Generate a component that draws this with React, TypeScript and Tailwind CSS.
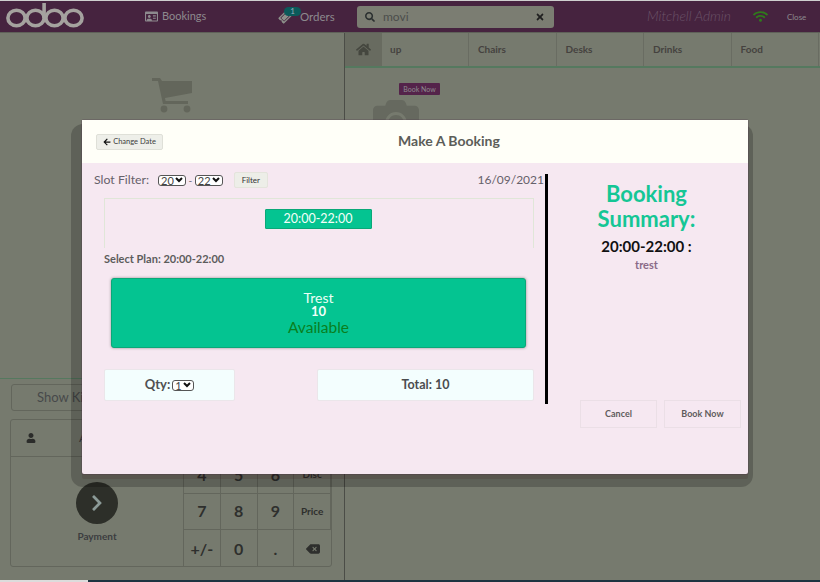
import { FaArrowLeft, FaCamera, FaChevronRight, FaHome, FaRegIdCard, FaSearch, FaTicketAlt, FaTimes, FaUser, FaWifi } from 'react-icons/fa';
import { FaDeleteLeft } from 'react-icons/fa6';

const tabs = ['up', 'Chairs', 'Desks', 'Drinks', 'Food'];

const keypadRows = [
  ['4', '5', '6', 'Disc'],
  ['7', '8', '9', 'Price'],
  ['+/-', '0', '.', 'back'],
];

function OdooLogo() {
  return (
    <svg width="78" height="25" viewBox="0 0 78 25" fill="none" stroke="#a5a29f" strokeWidth="3.6">
      <ellipse cx="10.5" cy="15" rx="8.6" ry="7.8" />
      <ellipse cx="29.5" cy="15" rx="8.6" ry="7.8" />
      <path d="M38.1 0v15" />
      <ellipse cx="48.5" cy="15" rx="8.6" ry="7.8" />
      <ellipse cx="67.5" cy="15" rx="8.6" ry="7.8" />
    </svg>
  );
}

function CartIcon() {
  return (
    <svg width="40" height="35" viewBox="0 0 40 35" fill="#63665b">
      <path d="M0 0h8l2 3h30v12L13 20l.6 3H36v3H11L6 3H0z" />
      <circle cx="12" cy="31" r="3.4" />
      <circle cx="35" cy="31" r="3.4" />
    </svg>
  );
}

function SmallSelect({ value, width }: { value: string; width: string }) {
  return (
    <span className={`inline-flex h-[11px] ${width} items-center justify-between rounded-[3px] border border-[#555] bg-white pl-[2px] pr-[2px] text-[11px] font-normal leading-none text-[#444]`}>
      {value}
      <svg width="8" height="6" viewBox="0 0 8 6" fill="none" stroke="#111" strokeWidth="2">
        <path d="M1 1l3 3 3-3" />
      </svg>
    </span>
  );
}

function PosBackground() {
  return (
    <div className="flex h-[582px] w-[820px] flex-col bg-[#767a6e]">
      <div className="h-px bg-[#cfcfcf]" />
      <header className="flex h-[32px] items-center border-b border-[#5f6159] bg-[#46233f] text-[#8d8a8e]">
        <div className="ml-[6px] mt-[-2px] w-[139px]">
          <OdooLogo />
        </div>
        <div className="flex w-[134px] items-center gap-[4px] text-[11px]">
          <FaRegIdCard className="text-[13px]" />
          Bookings
        </div>
        <div className="relative flex w-[78px] items-center gap-[9px] text-[11.5px]">
          <FaTicketAlt className="-rotate-45 text-[12px] text-[#8d918b]" />
          Orders
          <span className="absolute left-[5px] top-[-1px] h-[9px] w-[17px] rounded-full bg-[#0b5a5a] text-center text-[8px] leading-[9px] text-[#9ab]">1</span>
        </div>
        <div className="flex h-[22px] w-[197px] items-center rounded-[3px] bg-[#7b7d72] pl-[8px] pr-[9px] text-[12px] text-[#4b4e4c]">
          <FaSearch className="mr-[8px] text-[10px] text-[#2b3030]" />
          <span className="flex-1">movi</span>
          <FaTimes className="text-[10px] text-[#202020]" />
        </div>
        <span className="ml-[93px] text-[13.8px] font-light italic text-[#6b5368]">Mitchell Admin</span>
        <FaWifi className="ml-[22px] text-[15px] text-[#2f7a1b]" />
        <span className="ml-[19px] text-[8px] text-[#8d8a8e]">Close</span>
      </header>
      <main className="flex min-h-0 flex-1">
        <section className="flex w-[345px] flex-col border-r border-[#4b4d47]">
          <div className="flex h-[346px] justify-center border-b border-[#55795f] pt-[45px]">
            <div className="ml-[-1px]">
              <CartIcon />
            </div>
          </div>
          <div className="px-[11px] pt-[5px]">
            <div className="h-[27px] w-[300px] rounded-[3px] border border-[#63665c] pl-[25px] text-[13px] leading-[25px] text-[#47494a]">Show Kit</div>
            <div className="ml-[-1px] mt-[8px] h-[148px] w-[322px] rounded-[3px] border border-[#63665c]">
              <div className="flex h-[37px] items-center border-b border-[#63665c] pl-[15px] text-[#2b2c2a]">
                <FaUser className="text-[10px]" />
                <span className="ml-[43px] text-[12px] text-[#3c3d40]">Admin</span>
              </div>
              <div className="flex h-[110px]">
                <div className="flex w-[172px] flex-col items-center pt-[25px]">
                  <div className="flex h-[42px] w-[42px] items-center justify-center rounded-full bg-[#2d2f29] text-[18px] text-[#8b9a97]">
                    <FaChevronRight />
                  </div>
                  <span className="mt-[5px] text-[10px] font-bold text-[#3c3d40]">Payment</span>
                </div>
                <div className="grid flex-1 grid-cols-4 grid-rows-3 border-l border-[#63665c]">
                  {keypadRows.map((row, i) =>
                    row.map((key) => (
                      <div
                        key={key}
                        className={`flex items-center justify-center border-r border-[#63665c] font-bold text-[#2e2f2d] last:border-r-0 ${i === 2 ? '' : 'border-b'} ${key === 'Disc' || key === 'Price' ? 'text-[10px]' : 'text-[16px]'}`}
                      >
                        {key === 'back' ? <FaDeleteLeft className="text-[14px]" /> : key}
                      </div>
                    )),
                  )}
                </div>
              </div>
            </div>
          </div>
        </section>
        <section className="flex-1">
          <div className="flex h-[35px] border-b-2 border-[#55795f] text-[10px] font-bold text-[#45423f]">
            <div className="flex w-[37px] items-center justify-center bg-[#686b60] text-[15px] text-[#45473f]">
              <FaHome />
            </div>
            {tabs.map((tab, i) => (
              <div key={tab} className={`flex items-center border-r border-[#696c62] ${i === 0 ? 'w-[87px] pl-[8px]' : 'w-[87.5px] pl-[9px]'}`}>
                {tab}
              </div>
            ))}
          </div>
          <div className="flex flex-col pl-[54px] pt-[15px]">
            <span className="w-[41px] rounded-[1px] bg-[#54234a] text-center text-[7px] leading-[12px] text-[#8d8a8e]">Book Now</span>
            <FaCamera className="ml-[-26px] mt-[2px] text-[46px] text-[#66695f]" />
          </div>
        </section>
      </main>
      <div className="flex h-[2px]">
        <div className="w-[88px] bg-[#dcdcdc]" />
        <div className="flex-1 bg-[#1d3441]" />
      </div>
    </div>
  );
}

function BookingModal() {
  return (
    <div className="absolute left-[82px] top-[120px] h-[354px] w-[666px] rounded-[2px] bg-[#f6e8f1] text-[#5a5558] shadow-[0_0_0_1px_rgba(70,35,63,0.2),0_5px_0_rgba(60,30,30,0.15)]">
      <div className="flex h-[43px] items-center bg-[#fffff8] pl-[14px]">
        <span className="flex h-[16px] w-[67px] items-center justify-center gap-[2px] rounded-[2px] border border-[#dfe0d8] bg-[#eeefe9] text-[7.5px] text-[#3d3d3d]">
          <FaArrowLeft className="text-[8px] text-[#111]" />
          Change Date
        </span>
        <h1 className="ml-[235px] mt-[-2px] text-[14px] font-bold text-[#5c5d58]">Make A Booking</h1>
      </div>
      <div className="flex">
        <div className="mt-[11px] h-[230px] w-[466px] border-r-[3px] border-black">
          <div className="flex h-[24px] items-center pb-[12px] pl-[12px] text-[12.3px] text-[#66616a]">
            <span>Slot Filter:</span>
            <span className="ml-[9px] flex"><SmallSelect value="20" width="w-[28px]" /></span>
            <span className="mx-[2.5px] text-[10px]">-</span>
            <SmallSelect value="22" width="w-[28px]" />
            <span className="ml-[11px] flex h-[16px] w-[34px] items-center justify-center rounded-[2px] border border-[#e4e4dc] bg-[#edeee8] text-[8px] text-[#333]">Filter</span>
            <span className="ml-auto mr-[1px] text-[12px]">16/09/2021</span>
          </div>
          <div className="ml-[22px] flex h-[50px] w-[430px] justify-center border-x border-t border-[#e0e6d8] pr-[2px] pt-[10px]">
            <div className="flex h-[20px] w-[107px] items-center justify-center rounded-[1px] border border-[#0aa878] bg-[#04c491] text-[12.5px] text-[#f3fff9]">20:00-22:00</div>
          </div>
          <div className="ml-[22px] mt-[4px] text-[11px] font-bold leading-[14px] text-[#5c5c5c]">Select Plan: 20:00-22:00</div>
          <div className="ml-[29px] mt-[12px] flex h-[70px] w-[415px] flex-col items-center justify-center rounded-[3px] border border-[#0aa878] bg-[#04c491] shadow-[0_0_3px_rgba(0,0,0,0.4)]">
            <span className="text-[14px] leading-[15px] text-[#eafff6]">Trest</span>
            <span className="text-[13px] font-bold leading-[13px] text-[#f3fff9]">10</span>
            <span className="text-[15.5px] leading-[19px] text-[#0a7f1e]">Available</span>
          </div>
          <div className="ml-[22px] mt-[21px] flex w-[430px] justify-between">
            <div className="flex h-[32px] w-[131px] items-center justify-center gap-[2px] rounded-[2px] border border-[#ebe6ea] bg-[#f3fefe] text-[13px] font-bold text-[#4f5052]">
              Qty:
              <SmallSelect value="1" width="w-[22px]" />
            </div>
            <div className="flex h-[32px] w-[217px] items-center justify-center rounded-[2px] border border-[#ebe6ea] bg-[#f3fefe] text-[12.5px] font-bold text-[#4a4c4e]">Total: 10</div>
          </div>
        </div>
        <div className="flex h-[265px] flex-1 flex-col items-center pr-[3px] pt-[18px]">
          <div className="w-[178px] text-center">
            <h2 className="text-[22px] font-bold leading-[25px] text-[#15c695]">Booking Summary:</h2>
            <div className="mt-[6px] text-[15px] font-bold leading-[18px] text-[#111]">20:00-22:00 :</div>
            <div className="mt-[3px] text-[11px] font-bold leading-[14px] text-[#8a6a88]">trest</div>
          </div>
          <div className="mt-auto ml-[28px] flex gap-[7px] text-[9px] font-bold text-[#5f5c5c]">
            <span className="flex h-[28px] w-[77px] items-center justify-center border border-[#ebdfe6]">Cancel</span>
            <span className="flex h-[28px] w-[77px] items-center justify-center border border-[#ebdfe6]">Book Now</span>
          </div>
        </div>
      </div>
    </div>
  );
}

export default function App() {
  return (
    <div className="relative h-[582px] w-[820px] overflow-hidden font-['Lato',sans-serif]">
      <PosBackground />
      <div className="absolute left-[71px] top-[124px] h-[363px] w-[682px] rounded-[12px] bg-black/20" />
      <BookingModal />
    </div>
  );
}
